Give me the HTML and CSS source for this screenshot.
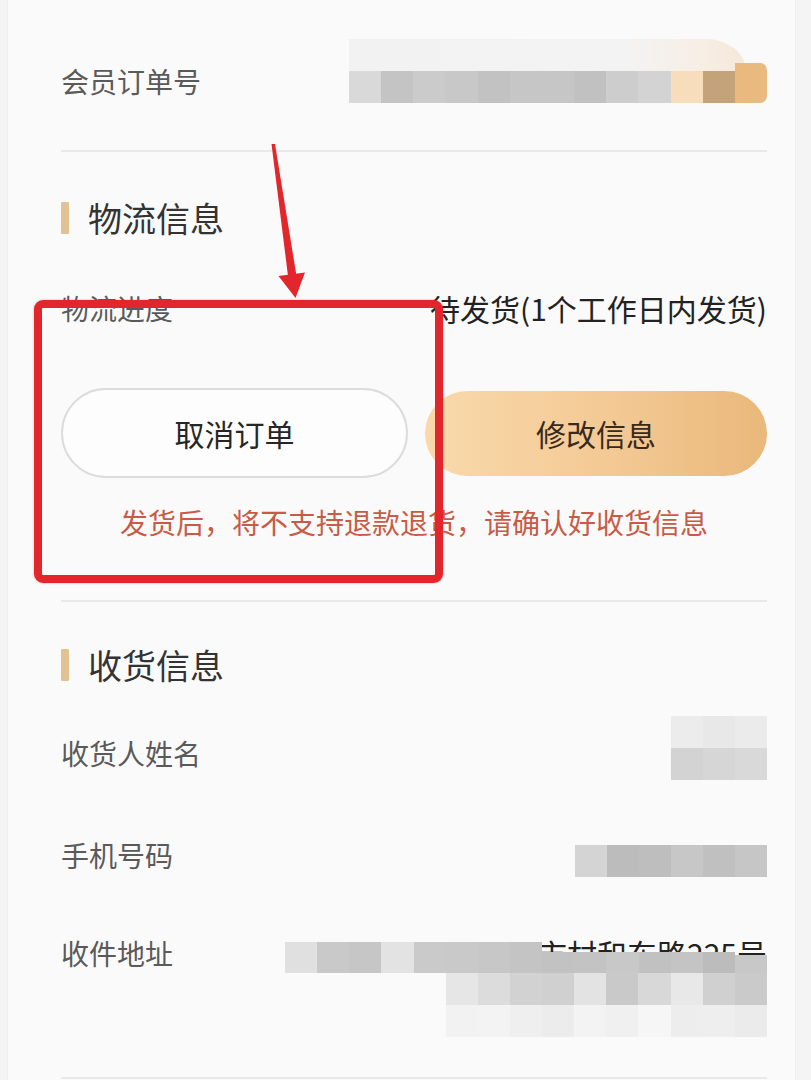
FILE: index.html
```html
<!DOCTYPE html>
<html lang="zh-CN">
<head>
<meta charset="utf-8">
<title>订单详情</title>
<link rel="stylesheet" href="styles.css">
</head>
<body>
<div class="card">
  <div class="order-row">
    <span class="label order-label">会员订单号</span>
    <div class="order-mosaic">
      <div class="strip"></div>
      <div class="cells">
        <i class="g-d9"></i><i class="g-c4"></i><i class="g-cb"></i><i class="g-c8"></i><i class="g-c2"></i><i class="g-c6"></i><i class="g-c6"></i><i class="g-c1"></i><i class="g-cd"></i><i class="g-d3"></i><i class="p-peach"></i><i class="p-brown"></i><i class="p-end"></i>
      </div>
    </div>
  </div>
  <div class="divider"></div>

  <div class="section-title t1"><span class="bar"></span><span class="title-text">物流信息</span></div>
  <div class="kv logistics">
    <span class="label">物流进度</span>
    <span class="value">待发货(1个工作日内发货)</span>
  </div>
  <div class="actions">
    <button class="btn btn-cancel">取消订单</button>
    <button class="btn btn-modify">修改信息</button>
  </div>
  <p class="warning">发货后，将不支持退款退货，请确认好收货信息</p>
  <div class="divider d2"></div>

  <div class="section-title t2"><span class="bar"></span><span class="title-text">收货信息</span></div>
  <div class="kv name-row">
    <span class="label">收货人姓名</span>
    <div class="name-mosaic">
      <div class="mrow"><i class="g-ec"></i><i class="g-e8"></i><i class="g-eb"></i></div>
      <div class="mrow"><i class="g-d3"></i><i class="g-d6"></i><i class="g-d9"></i></div>
    </div>
  </div>
  <div class="kv phone-row">
    <span class="label">手机号码</span>
    <div class="phone-mosaic">
      <i class="g-d4"></i><i class="g-bc"></i><i class="g-be"></i><i class="g-c7"></i><i class="g-c0"></i><i class="g-c6"></i>
    </div>
  </div>
  <div class="kv addr-row">
    <span class="label">收件地址</span>
    <div class="addr-value">
      <span class="value addr-text">市村和东路225号</span>
      <div class="addr-mask">
        <div class="arow r1">
          <i class="g-e0"></i><i class="g-c9"></i><i class="g-c6"></i><i class="g-e3"></i><i class="g-ca"></i><i class="g-c9"></i><i class="g-c7"></i><i class="g-c4"></i><i class="low g-c2"></i><i class="low g-c3"></i><i class="low g-c8"></i><i class="low g-c1"></i><i class="low g-c4"></i><i class="low g-bc"></i><i class="lower g-c8"></i>
        </div>
        <div class="arow r2">
          <i class="g-e6"></i><i class="g-dc"></i><i class="g-d2"></i><i class="g-d0"></i><i class="g-e3"></i><i class="g-c9"></i><i class="g-d8"></i><i class="g-e8"></i><i class="g-d0"></i><i class="g-ca"></i>
        </div>
        <div class="arow r3">
          <i class="g-f2"></i><i class="g-f3"></i><i class="g-ef"></i><i class="g-ec"></i><i class="g-f3"></i><i class="g-f0"></i><i class="g-f6"></i><i class="g-ed"></i><i class="g-ee"></i><i class="g-eb"></i>
        </div>
      </div>
    </div>
  </div>
  <div class="divider d3"></div>
</div>

<div class="annotations">
  <div class="red-box"></div>
  <svg class="arrow" width="811" height="1080" viewBox="0 0 811 1080" xmlns="http://www.w3.org/2000/svg">
    <polygon points="271.5,144 275,144 297,279 288.5,280" fill="#e3262b"/>
    <polygon points="278.5,276 305,272.5 295.5,298" fill="#e3262b"/>
  </svg>
</div>
</body>
</html>
```

FILE: styles.css
```css
* { box-sizing: border-box; }

html, body {
  margin: 0;
  padding: 0;
}

body {
  width: 811px;
  height: 1080px;
  overflow: hidden;
  background: #f4f4f4;
  font-family: "Noto Sans CJK SC", "Noto Sans", sans-serif;
  position: relative;
}

.card {
  margin-left: 7px;
  width: 789px;
  height: 1080px;
  background: #fafafa;
  border-left: 1px solid #efefef;
  border-right: 1px solid #efefef;
  padding: 0 28px 0 53px;
}

.label {
  font-size: 28px;
  line-height: 40px;
  color: #5a5a5a;
  white-space: nowrap;
}

.value {
  font-size: 30px;
  line-height: 40px;
  color: #222;
  white-space: nowrap;
}

i { display: block; }

/* order row */
.order-row {
  height: 150px;
  display: flex;
  justify-content: space-between;
  align-items: flex-start;
}

.order-label { margin-top: 61px; }

.order-mosaic {
  margin-top: 39px;
  width: 418px;
  display: flex;
  flex-direction: column;
}

.strip {
  width: 397px;
  height: 32px;
  background: linear-gradient(90deg, #f2f2f2 0%, #f3f3f3 70%, #f7eee5 88%, #f6e8d9 100%);
  border-top-right-radius: 40px 32px;
}

.cells {
  height: 32px;
  display: flex;
  align-items: flex-end;
}

.cells i {
  flex: 1;
  height: 32px;
}

.p-peach { background: #f7ddbb; }
.p-brown { background: #c4a27a; }
.p-end {
  background: linear-gradient(90deg, #eab97d, #e8bb80);
  height: 40px !important;
  border-top-right-radius: 7px;
  border-bottom-right-radius: 7px;
}

.divider {
  height: 2px;
  background: #e9e9e9;
}

/* section titles */
.section-title {
  display: flex;
  align-items: center;
  height: 40px;
}

.t1 { margin-top: 46px; }
.t2 { margin-top: 43px; }

.bar {
  width: 8px;
  height: 32px;
  background: #e2c194;
  border-radius: 1px;
  margin-right: 19px;
}

.title-text {
  font-size: 34px;
  line-height: 40px;
  color: #333;
}

.kv {
  display: flex;
  justify-content: space-between;
  align-items: center;
}

.logistics {
  margin-top: 50px;
  height: 40px;
}

/* buttons */
.actions {
  margin-top: 60px;
  display: flex;
  align-items: center;
  gap: 17px;
}

.btn {
  font-family: inherit;
  font-size: 30px;
  line-height: 40px;
  border-radius: 48px;
  padding: 0;
  cursor: pointer;
}

.btn-cancel {
  width: 347px;
  height: 90px;
  background: #fdfdfd;
  border: 2px solid #dcdcdc;
  color: #262626;
}

.btn-modify {
  flex: 1;
  height: 85px;
  border: none;
  background: linear-gradient(90deg, #f9d9ab 0%, #f3c994 55%, #e9b87a 100%);
  color: #3a2a1b;
}

.warning {
  margin: 22px 0 0;
  text-align: center;
  font-size: 28px;
  line-height: 44px;
  color: #c95b46;
}

.d2 { margin-top: 56px; }

/* name */
.name-row {
  margin-top: 31px;
  height: 64px;
  align-items: flex-start;
}

.name-row .label { margin-top: 17px; }

.name-mosaic {
  width: 96px;
  display: flex;
  flex-direction: column;
}

.mrow {
  display: flex;
  height: 32px;
}

.mrow i,
.phone-mosaic i,
.arow i {
  flex: 1;
  height: 100%;
}

/* phone */
.phone-row {
  margin-top: 55px;
  height: 42px;
  align-items: flex-start;
}

.phone-mosaic {
  margin-top: 10px;
  width: 192px;
  height: 32px;
  display: flex;
}

/* address */
.addr-row {
  margin-top: 56px;
  height: 105px;
  align-items: flex-start;
}

.addr-value {
  position: relative;
  flex: 1;
  height: 105px;
  display: flex;
  justify-content: flex-end;
}

.addr-mask {
  position: absolute;
  right: 0;
  top: 9px;
  width: 482px;
  display: flex;
  flex-direction: column;
  align-items: flex-end;
}

.arow {
  display: flex;
  width: 100%;
  height: 32px;
}

.arow.r1 {
  align-items: flex-end;
  height: 31px;
}

.arow.r1 i { height: 31px; }
.arow.r1 i.low { height: 21px; }
.arow.r1 i.lower { height: 18px; }

.arow.r2,
.arow.r3 {
  width: 321.3px;
}

.d3 { margin-top: 39px; }

/* shades */
.g-bc { background: #bcbcbc; }
.g-be { background: #bebebe; }
.g-c0 { background: #c0c0c0; }
.g-c1 { background: #c1c1c1; }
.g-c2 { background: #c2c2c2; }
.g-c3 { background: #c3c3c3; }
.g-c4 { background: #c4c4c4; }
.g-c6 { background: #c6c6c6; }
.g-c7 { background: #c7c7c7; }
.g-c8 { background: #c8c8c8; }
.g-c9 { background: #c9c9c9; }
.g-ca { background: #cacaca; }
.g-cb { background: #cbcbcb; }
.g-cd { background: #cdcdcd; }
.g-d0 { background: #d0d0d0; }
.g-d2 { background: #d2d2d2; }
.g-d3 { background: #d3d3d3; }
.g-d4 { background: #d4d4d4; }
.g-d6 { background: #d6d6d6; }
.g-d8 { background: #d8d8d8; }
.g-d9 { background: #d9d9d9; }
.g-dc { background: #dcdcdc; }
.g-e0 { background: #e0e0e0; }
.g-e3 { background: #e3e3e3; }
.g-e6 { background: #e6e6e6; }
.g-e8 { background: #e8e8e8; }
.g-eb { background: #ebebeb; }
.g-ec { background: #ececec; }
.g-ed { background: #ededed; }
.g-ee { background: #eeeeee; }
.g-ef { background: #efefef; }
.g-f0 { background: #f0f0f0; }
.g-f2 { background: #f2f2f2; }
.g-f3 { background: #f3f3f3; }
.g-f6 { background: #f6f6f6; }

/* annotation overlay */
.annotations {
  position: absolute;
  left: 0;
  top: 0;
  width: 811px;
  height: 1080px;
  pointer-events: none;
}

.red-box {
  position: absolute;
  left: 34px;
  top: 300px;
  width: 409px;
  height: 283px;
  border: 8px solid #e3262b;
  border-radius: 9px;
  box-shadow: 0 0 2px rgba(227, 38, 43, 0.5);
}

.arrow {
  position: absolute;
  left: 0;
  top: 0;
}
```
